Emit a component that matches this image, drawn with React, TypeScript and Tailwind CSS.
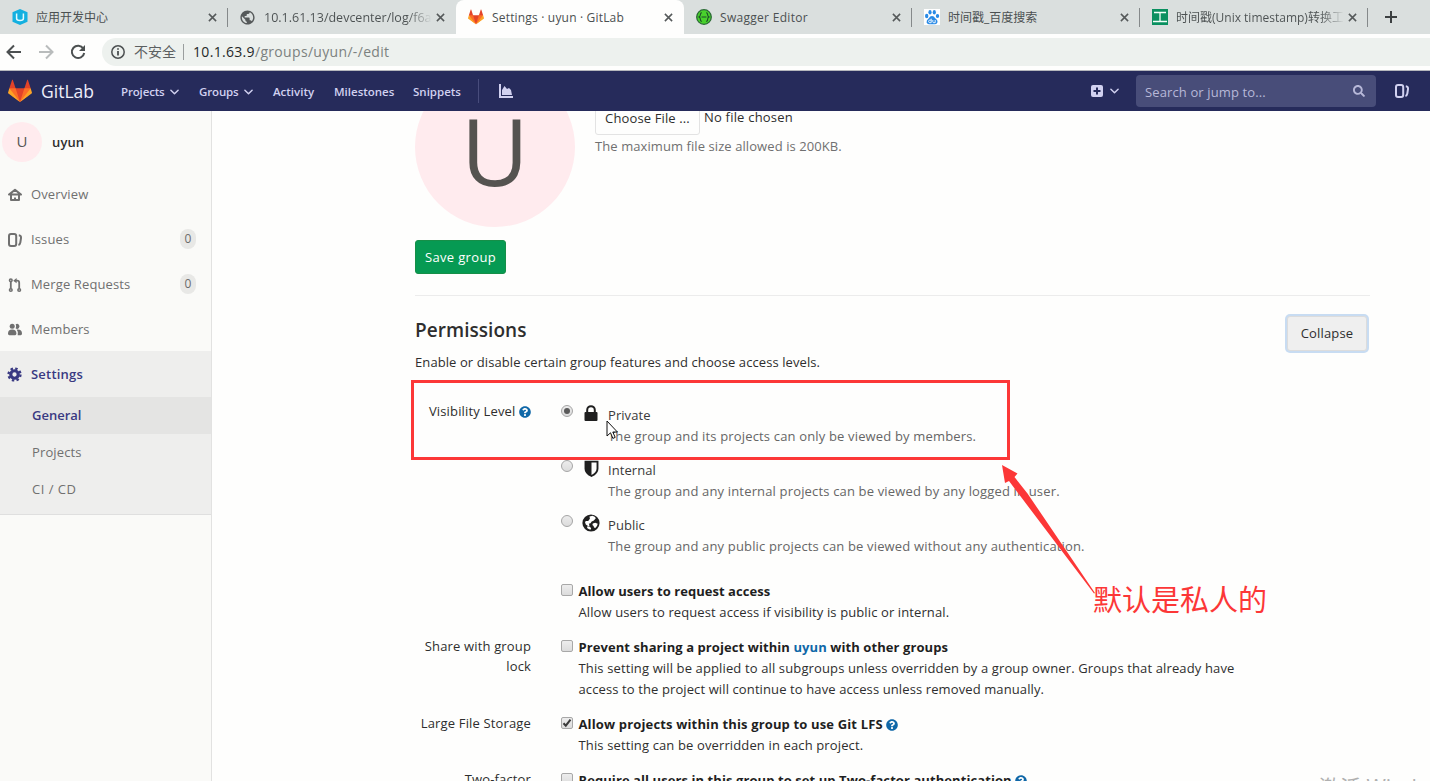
import React from "react";
import { FaQuestionCircle, FaSearch } from "react-icons/fa";
import { MdPublic } from "react-icons/md";

function Tanuki({ className }: { className?: string }) {
  return (
    <svg viewBox="0 0 36 36" className={className}>
      <path fill="#e24329" d="M2 14l9.38 9v-9l-4-12.28c-.205-.632-1.176-.632-1.38 0z" />
      <path fill="#e24329" d="M34 14l-9.38 9v-9l4-12.28c.205-.632 1.176-.632 1.38 0z" />
      <path fill="#e24329" d="M18 34.38L3 14h30z" />
      <path fill="#fc6d26" d="M18 34.38L11.38 14H2l4 11z" />
      <path fill="#fc6d26" d="M18 34.38L24.62 14H34l-4 11z" />
      <path fill="#fca326" d="M2 14L.1 20.16c-.18.565 0 1.2.5 1.56l17.42 12.66z" />
      <path fill="#fca326" d="M34 14l1.9 6.16c.18.565 0 1.2-.5 1.56L18 34.38z" />
    </svg>
  );
}

function Cross() {
  return (
    <svg viewBox="0 0 10 10" className="h-[9px] w-[9px] shrink-0" stroke="#55595a" strokeWidth="1.7">
      <path d="M1 1l8 8M9 1L1 9" />
    </svg>
  );
}

function Chevron() {
  return (
    <svg viewBox="0 0 10 6" className="h-[6px] w-[9px]" fill="none" stroke="#d1d1f0" strokeWidth="1.6" strokeLinecap="round" strokeLinejoin="round">
      <path d="M1 1l4 4 4-4" />
    </svg>
  );
}

function IssuesIcon({ className }: { className?: string }) {
  return (
    <svg viewBox="0 0 16 16" className={className} fill="none" stroke="currentColor" strokeWidth="2">
      <rect x="2" y="2" width="7.2" height="12" rx="2" />
      <path d="M11.800 3.200q2.600.3 2.200 3l-.7 4.500q-.3 1.900-1.900 2.300" />
    </svg>
  );
}

function HomeIcon() {
  return (
    <svg viewBox="0 0 16 16" className="h-4 w-4" fill="none" stroke="currentColor" strokeWidth="2" strokeLinejoin="round">
      <path d="M2 7.600L8 2.800 14 7.600z" />
      <path d="M4 8v5h8V8" />
      <path d="M7 11.200h2" strokeWidth="1.500" />
    </svg>
  );
}

function MergeIcon() {
  return (
    <svg viewBox="0 0 16 16" className="h-4 w-4" fill="none" stroke="currentColor" strokeWidth="1.6">
      <circle cx="3.8" cy="3.300" r="1.300" />
      <circle cx="3.8" cy="13" r="1.300" />
      <circle cx="12.200" cy="13" r="1.300" />
      <path d="M3.800 4.600v7.100M12.200 11.700V5.800q0-2.100-2-2.100H8.500" strokeWidth="1.800" />
      <path d="M9.600 1v5.200L6.200 3.700z" fill="currentColor" stroke="none" />
    </svg>
  );
}

function MembersIcon() {
  return (
    <svg viewBox="0 0 16 16" className="h-4 w-4" fill="currentColor">
      <circle cx="5.200" cy="4.300" r="2.500" />
      <path d="M8.700 2.200A2.500 2.500 0 1 1 8.700 6.500q1-2.200 0-4.300z" />
      <path d="M1 11.500q0-4 4.200-4t4.200 4q0 1.800-1.300 1.800H2.300Q1 13.300 1 11.500z" />
      <path d="M9.700 7.500q5.300-.5 5.300 4 0 1.800-1.300 1.800h-3q.7-3.800-1-5.800z" />
    </svg>
  );
}

function GearIcon() {
  return (
    <svg viewBox="0 0 16 16" className="h-[15px] w-[15px] shrink-0" fill="none" stroke="#393982">
      <circle cx="8" cy="8" r="4" strokeWidth="3.4" />
      <circle cx="8" cy="8" r="6.4" strokeWidth="2.4" strokeDasharray="2.6 2.426" />
    </svg>
  );
}

function LockIcon() {
  return (
    <svg viewBox="0 0 14 16" className="h-4 w-[14px]">
      <rect x="0.500" y="7" width="13" height="9" rx="1" fill="#1f1f1f" />
      <path d="M3.200 8V5a3.800 3.800 0 0 1 7.600 0v3" fill="none" stroke="#1f1f1f" strokeWidth="2" />
    </svg>
  );
}

function ShieldIcon() {
  return (
    <svg viewBox="0 0 14 17" className="h-[17px] w-[15px]">
      <path d="M1 1.6h12v7.2q0 4.4-6 7.2-6-2.800-6-7.200z" fill="none" stroke="#1f1f1f" strokeWidth="1.9" />
      <path d="M1 1.600h6V16Q1 13.200 1 8.800z" fill="#1f1f1f" />
    </svg>
  );
}

function EarthIcon() {
  return (
    <svg viewBox="0 0 18 18" className="h-[18px] w-[18px] shrink-0">
      <circle cx="9" cy="9" r="8.600" fill="#1f1f1f" />
      <path fill="#fefefd" d="M7.500 2.600l3-.8 2.600 1.200.6 1.500-2.200 2.200-1.800.7-1.200 1.800-1.700.6.8 1.600-1.200.8-2.600-1.600L3 8.300l.8-1.200 2.400-.2 1.700-2.200zM10.800 9.600l2.400-.9 2.500 1q-.3 2.600-2.400 4.300l-1.300-.5-.4-1.500-1.200-1.100zM5.300 12.300l2.700.5 1.200 1.600-.8 1.300q-1.900-.3-3.300-1.700z" />
    </svg>
  );
}

function SwaggerIcon() {
  return (
    <svg viewBox="0 0 16 16" className="h-4 w-4">
      <circle cx="8" cy="8" r="7.300" fill="#49d12c" stroke="#2c6b37" strokeWidth="1.300" />
      <path d="M6 3.800q-1.600 0-1.600 1.700T3 8q1.400.5 1.400 2.500T6 12.200M10 3.800q1.600 0 1.600 1.700T13 8q-1.400.5-1.400 2.500T10 12.200M5.500 8h5" fill="none" stroke="#1d4d2a" strokeWidth="1.100" />
    </svg>
  );
}

function HexIcon() {
  return (
    <svg viewBox="0 0 16 16" className="h-4 w-4">
      <path d="M8 0l7.500 3.200v9.600L8 16 .5 12.800V3.200z" fill="#14b0e0" />
      <path d="M4.600 4.500v5q0 2 3.400 2t3.400-2v-5" fill="none" stroke="#e6fbff" strokeWidth="1.500" />
    </svg>
  );
}

function PawIcon() {
  return (
    <span className="flex h-4 w-4 items-center justify-center bg-white">
      <svg viewBox="0 0 16 16" className="h-4 w-4" fill="#2a8be6">
        <ellipse cx="2.700" cy="7" rx="1.700" ry="2.200" />
        <ellipse cx="6" cy="3.300" rx="1.600" ry="2.300" />
        <ellipse cx="10.300" cy="3.300" rx="1.600" ry="2.300" />
        <ellipse cx="13.500" cy="7" rx="1.700" ry="2.100" />
        <path d="M8 7q2 0 3.200 2.300Q14 11 13.400 13.500 12.800 15.600 8 15.300q-4.800.3-5.400-1.800Q2.200 11 4.800 9.300 6 7 8 7z" />
        <path d="M7.200 9.700v4H5.800q-1.200-.1-1.200-1.300t1.200-1.300h1.400M8.800 11v1.800q0 .9.900.9h1.500V11" fill="none" stroke="#fff" strokeWidth=".9" />
      </svg>
    </span>
  );
}

function WorkIcon() {
  return (
    <svg viewBox="0 0 16 16" className="h-4 w-4">
      <path fill="#0a9060" d="M0 0h16v16H0z" />
      <path d="M2 3.500h12M8 3.500v9M1 12.500h14" stroke="#f2fff8" strokeWidth="1.300" />
    </svg>
  );
}

function Tab({ icon, children, divider = true, className = "" }: { icon: React.ReactNode; children: React.ReactNode; divider?: boolean; className?: string }) {
  return (
    <div className={"relative flex h-[34px] w-[228px] shrink-0 items-center pl-3 pr-[11px] " + className}>
      {icon}
      <span className="ml-2 mr-[5px] mt-[2px] h-5 flex-1 overflow-hidden whitespace-nowrap text-[12px] leading-5 text-[#4b5051]">{children}</span>
      <Cross />
      {divider && <span className="absolute right-0 top-2 h-[19px] w-px bg-[#85898a]" />}
    </div>
  );
}

function NavItem({ children, caret, className }: { children: string; caret?: boolean; className?: string }) {
  return (
    <div className={"flex items-center gap-[5px] " + className}>
      <span>{children}</span>
      {caret && <Chevron />}
    </div>
  );
}

function SideItem({ icon, label, count }: { icon: React.ReactNode; label: string; count?: string }) {
  return (
    <div className="flex h-[45px] items-center pl-[7px] pr-[15px] text-[#707070]">
      <span className="flex w-4 justify-center">{icon}</span>
      <span className="ml-2 flex-1">{label}</span>
      {count && <span className="-mt-px flex h-5 w-4 items-center justify-center rounded-full bg-[#e8e8e6] text-[12px] tracking-normal text-[#6b6b6b]">{count}</span>}
    </div>
  );
}

function Help({ className = "" }: { className?: string }) {
  return <FaQuestionCircle className={"inline-block h-3 w-3 text-[#1068a8] " + className} />;
}

function Radio({ checked }: { checked?: boolean }) {
  return (
    <span className="flex h-3 w-3 shrink-0 items-center justify-center rounded-full border border-[#a5a5a5] bg-linear-to-b from-[#ececec] to-[#dcdcdc]">
      {checked && <span className="h-[6px] w-[6px] rounded-full bg-[#5a5a5a]" />}
    </span>
  );
}

function Check({ checked }: { checked?: boolean }) {
  return (
    <span className="mt-[3px] flex h-3 w-3 shrink-0 items-center justify-center rounded-[2px] border border-[#a8a8a8] bg-linear-to-b from-[#ededed] to-[#dcdcdc]">
      {checked && (
        <svg viewBox="0 0 10 10" className="h-[10px] w-[10px]" fill="none" stroke="#3b3b3b" strokeWidth="2">
          <path d="M1.500 5.200l2.300 2.500L8.500 1.600" />
        </svg>
      )}
    </span>
  );
}

function Option({ icon, title, text, checked }: { icon: React.ReactNode; title: string; text: string; checked?: boolean }) {
  return (
    <div className="flex h-[55px]">
      <Radio checked={checked} />
      <span className="ml-[9px] flex h-4 w-[18px] shrink-0 items-center justify-center">{icon}</span>
      <div className="ml-2 leading-[21px]">
        <div className="tracking-[0.060px] text-[#3a3a3a]">{title}</div>
        <div className="whitespace-nowrap tracking-[0.160px] text-[#666]">{text}</div>
      </div>
    </div>
  );
}

function Row({ label, height, checked, title, children }: { label?: React.ReactNode; height: string; checked?: boolean; title: React.ReactNode; children?: React.ReactNode }) {
  return (
    <div className={"flex " + height}>
      <div className="-mt-px w-[116px] shrink-0 text-right leading-5 tracking-[0.150px]">{label}</div>
      <div className="ml-[30px] flex">
        <Check checked={checked} />
        <div className="ml-[5.500px] whitespace-nowrap leading-[21px]">
          <div className="font-bold tracking-[0.080px] text-[#1f1f1f]">{title}</div>
          {children}
        </div>
      </div>
    </div>
  );
}

export default function App() {
  return (
    <div className="relative flex h-[781px] w-[1430px] flex-col overflow-hidden bg-[#fefefd] font-['Open_Sans','Noto_Sans_CJK_SC',sans-serif] text-[13px] tracking-[0.130px] text-[#2e2e2e]">
      <div className="flex h-[34px] shrink-0 bg-[#dadfde]">
        <Tab icon={<HexIcon />}><span className="tracking-normal">应用开发中心</span></Tab>
        <Tab icon={<MdPublic className="h-[17px] w-[17px] text-[#55595a]" />} divider={false} className="pl-[11px]">
          <span className="bg-linear-to-r from-[#4b5051] from-85% to-[#dadfde] bg-clip-text text-[12.500px] tracking-normal text-transparent">10.1.61.13/devcenter/log/f6a</span>
        </Tab>
        <Tab icon={<Tanuki className="h-4 w-4" />} divider={false} className="rounded-t-lg bg-[#fefefd]">
          <span className="tracking-[0.180px]">Settings · uyun · GitLab</span>
        </Tab>
        <Tab icon={<SwaggerIcon />}><span className="tracking-[0.300px]">Swagger Editor</span></Tab>
        <Tab icon={<PawIcon />}><span className="tracking-normal">时间戳_百度搜索</span></Tab>
        <Tab icon={<WorkIcon />}>
          <span className="bg-linear-to-r from-[#4b5051] from-85% to-[#dadfde] bg-clip-text tracking-normal text-transparent">时间戳(Unix timestamp)转换工</span>
        </Tab>
        <div className="flex w-[46px] items-center justify-center">
          <svg viewBox="0 0 12 12" className="h-3 w-3" stroke="#3c4041" strokeWidth="2"><path d="M6 0v12M0 6h12" /></svg>
        </div>
      </div>

      <div className="flex h-[37px] shrink-0 items-center border-b border-[#b5b7bd] pl-[6px]">
        <svg viewBox="0 0 16 16" className="h-4 w-4" fill="none" stroke="#4c5051" strokeWidth="2"><path d="M15 8H2M8 1.500L1.500 8 8 14.500" /></svg>
        <svg viewBox="0 0 16 16" className="ml-4 h-4 w-4" fill="none" stroke="#b9bcbc" strokeWidth="2"><path d="M1 8h13M8 1.500L14.500 8 8 14.500" /></svg>
        <svg viewBox="0 0 16 16" className="ml-4 h-4 w-4" fill="none" stroke="#4c5051" strokeWidth="2"><path d="M13.300 4.500A6.200 6.200 0 1 0 14.200 9" /><path d="M15 1v6H9z" fill="#4c5051" stroke="none" /></svg>
        <div className="ml-4 flex h-7 flex-1 items-center rounded-l-full bg-[#edf1ee] pl-[9px]">
          <svg viewBox="0 0 14 14" className="h-[14px] w-[14px]" fill="none" stroke="#4c5051" strokeWidth="1.500"><circle cx="7" cy="7" r="6.200" /><path d="M7 6v4.500M7 3.300v1.500" strokeWidth="1.800" /></svg>
          <span className="-mt-px ml-[9px] text-[14px] tracking-normal text-[#5c6061]">不安全</span>
          <span className="ml-[7px] h-4 w-px bg-[#9a9e9e]" />
          <span className="-mt-[2px] ml-[9px] text-[14px] tracking-[0.320px] text-[#7c8180]"><span className="text-[#242828]">10.1.63.9</span>/groups/uyun/-/edit</span>
        </div>
      </div>

      <header className="flex h-10 shrink-0 items-center bg-[#262b5b] pl-2 text-[11.500px] font-semibold tracking-normal text-[#d1d1f0]">
        <Tanuki className="h-6 w-6" />
        <span className="ml-[9px] w-20 text-[17.500px] font-normal text-[#eeeefa]">GitLab</span>
        <NavItem caret className="w-[78px] pt-[2px] tracking-[-0.150px]">Projects</NavItem>
        <NavItem caret className="w-[74px] pt-[2px] tracking-[-0.150px]">Groups</NavItem>
        <NavItem className="w-[61px] pt-[2px]">Activity</NavItem>
        <NavItem className="w-[79px] pt-[2px]">Milestones</NavItem>
        <NavItem className="w-[65px] pt-[2px]">Snippets</NavItem>
        <span className="h-6 w-px bg-[#484c7c]" />
        <svg viewBox="0 0 14 14" className="ml-5 h-[14px] w-[14px]" fill="currentColor"><path d="M0 0h2v12h12v2H0zM3 11V6l2.500-4L8 5l2-1 2 2 1 5z" /></svg>
        <div className="ml-auto flex items-center">
          <svg viewBox="0 0 12 12" className="h-3 w-3"><rect width="12" height="12" rx="2" fill="#d1d1f0" /><path d="M6 2.500v7M2.500 6h7" stroke="#262b5b" strokeWidth="2" /></svg>
          <span className="ml-[7px]"><Chevron /></span>
          <div className="ml-[17px] flex h-8 w-60 items-center justify-between rounded bg-[#484d79] pl-[9px] pr-[11px] text-[13px] font-normal text-[#b7b8d8]">
            <span className="pt-[3px] tracking-[0.120px]">Search or jump to...</span>
            <FaSearch className="h-3 w-3" />
          </div>
          <IssuesIcon className="ml-[18px] mr-5 h-4 w-4" />
        </div>
      </header>

      <div className="flex min-h-0 flex-1">
        <aside className="flex w-[212px] shrink-0 flex-col border-r border-[#e2e2e1] bg-[#fafaf8]">
          <div className="flex h-[61px] items-center pl-[2px]">
            <span className="flex h-10 w-10 items-center justify-center rounded-full bg-[#ffebee] text-[15px] text-[#555]">U</span>
            <span className="ml-[10px] pt-[2px] font-semibold">uyun</span>
          </div>
          <SideItem icon={<HomeIcon />} label="Overview" />
          <SideItem icon={<IssuesIcon className="h-4 w-4" />} label="Issues" count="0" />
          <SideItem icon={<MergeIcon />} label="Merge Requests" count="0" />
          <SideItem icon={<MembersIcon />} label="Members" />
          <div className="-mt-px h-[164px] border-b border-[#dfdfdf] bg-[#eeeeed]">
            <div className="flex h-[46px] items-center pl-[7px] font-semibold text-[#393982]">
              <span className="flex w-4"><GearIcon /></span>
              <span className="ml-2 pt-[2px] font-semibold tracking-[0.200px]">Settings</span>
            </div>
            <div className="flex h-[37px] items-center bg-[#e4e4e3] pl-8 font-semibold tracking-normal text-[#393982]">General</div>
            <div className="flex h-[37px] items-center pl-8 pt-px text-[#707070]">Projects</div>
            <div className="flex h-[37px] items-center pl-8 pt-px tracking-[0.500px] text-[#707070]">CI / CD</div>
          </div>
        </aside>

        <main className="flex min-w-0 flex-1 flex-col overflow-hidden pl-[203px] pr-[60px]">
          <div className="-mt-11 flex h-[173px] shrink-0">
            <div className="flex h-40 w-40 shrink-0 items-center justify-center rounded-full bg-[#ffebee] text-[93px] leading-none tracking-normal text-[#555350]">
              <span className="pt-[7px]">U</span>
            </div>
            <div className="ml-5 pt-[33px]">
              <div className="flex">
                <span className="flex h-[35px] w-[105px] items-center justify-center rounded-[3px] border border-[#e3e3e3] pt-[2px]">Choose File ...</span>
                <span className="ml-[4px] mt-[8px] tracking-[0.200px]">No file chosen</span>
              </div>
              <div className="mt-[2px] tracking-[0.080px] text-[#707070]">The maximum file size allowed is 200KB.</div>
            </div>
          </div>
          <button className="h-[34px] w-[91px] shrink-0 rounded-[3px] border border-[#168f48] bg-[#069a53] pt-px tracking-[0.350px] text-white">Save group</button>
          <div className="mt-[21px] shrink-0 border-t border-[#ececec]" />
          <div className="flex h-[109px] shrink-0 justify-between">
            <div>
              <h4 className="mt-5 text-[19px] font-semibold leading-7 tracking-[0.050px]">Permissions</h4>
              <p className="mt-[8px] leading-[21px] tracking-[0.090px]">Enable or disable certain group features and choose access levels.</p>
            </div>
            <button className="mr-[3px] mt-5 h-[35px] w-20 rounded-[3px] border border-[#dcdcdc] bg-[#efefef] pt-px tracking-[0.150px] shadow-[0_0_0_2px_#c8dcf2]">Collapse</button>
          </div>

          <div className="flex h-[176px] shrink-0">
            <div className="-mt-1 w-[116px] shrink-0 text-right leading-5 tracking-[0.160px]">Visibility Level <Help className="mb-[2px]" /></div>
            <div className="ml-[30px]">
              <Option checked icon={<LockIcon />} title="Private" text="The group and its projects can only be viewed by members." />
              <Option icon={<ShieldIcon />} title="Internal" text="The group and any internal projects can be viewed by any logged in user." />
              <Option icon={<EarthIcon />} title="Public" text="The group and any public projects can be viewed without any authentication." />
            </div>
          </div>
          <Row height="h-14 shrink-0" title={<span className="tracking-[0.050px]">Allow users to request access</span>}>
            <div className="tracking-[0.110px]">Allow users to request access if visibility is public or internal.</div>
          </Row>
          <Row height="h-[77px] shrink-0" label={<>Share with group<br />lock</>} title={<>Prevent sharing a project within <span className="text-[#1068a8]">uyun</span> with other groups</>}>
            <div>This setting will be applied to all subgroups unless overridden by a group owner. Groups that already have</div>
            <div className="tracking-[0.110px]">access to the project will continue to have access unless removed manually.</div>
          </Row>
          <Row height="h-14 shrink-0" label="Large File Storage" checked title={<span className="tracking-[0.150px]">Allow projects within this group to use Git LFS <Help className="mb-[2px]" /></span>}>
            <div>This setting can be overridden in each project.</div>
          </Row>
          <Row height="h-14 shrink-0" label={<>Two-factor<br />authentication</>} title={<>Require all users in this group to set up Two-factor authentication <Help className="mb-[2px]" /></>} />
        </main>
      </div>

      <div className="absolute left-[411px] top-[380px] h-20 w-[599px] border-[3px] border-[#fc3737]" />
      <svg viewBox="0 0 100 135" className="absolute left-[1000px] top-[460px] h-[135px] w-[100px]" fill="#fc3737">
        <path d="M2 5l15.500 8.500-3 3.500 13 16.500L95 133l-1 .500L18 33 9 21l-4 2z" />
      </svg>
      <div className="absolute left-[1093px] top-[579px] whitespace-nowrap text-[29px] leading-[42px] tracking-normal text-[#fc3737]">默认是私人的</div>
      <svg viewBox="0 0 13 20" className="absolute left-[606px] top-[420px] h-5 w-[13px]">
        <path d="M1 1v15l3.500-3.200 2.400 5.600 2.300-1-2.400-5.400h4.600z" fill="#fff" stroke="#111" strokeWidth="1" />
      </svg>
      <div className="absolute left-[1319px] top-[773px] whitespace-nowrap text-[21px] leading-[28px] tracking-normal text-[#b0b0b0]">激活 Windows</div>
    </div>
  );
}
